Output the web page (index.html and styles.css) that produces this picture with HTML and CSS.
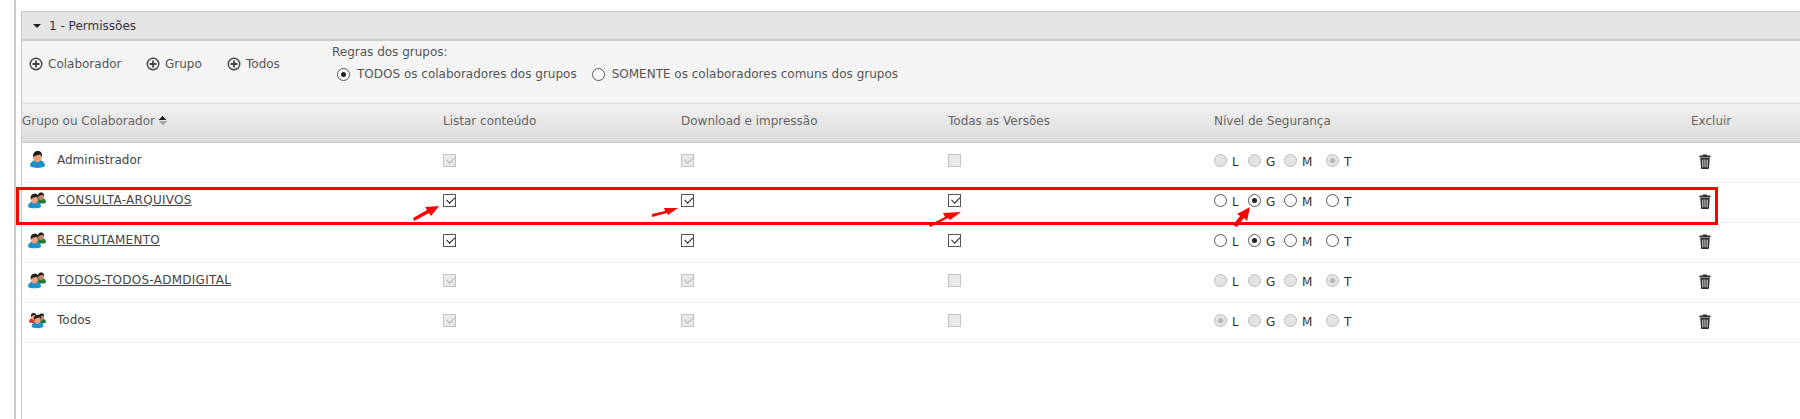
FILE: index.html
```html
<!DOCTYPE html>
<html lang="pt-BR">
<head>
    <meta charset="utf-8">
    <title>Permissões</title>
    <link rel="stylesheet" href="styles.css">
</head>
<body>

<svg class="defs" width="0" height="0">
    <symbol id="p-blue" viewBox="0 0 16 18">
        <path d="M0 16c0-3.500 2-5.500 5-6.500h6c3 1 5 3 5 6.500-2 2.600-14 2.600-16 0z" fill="#1e8fc9"/>
        <path d="M0 16c2 2.600 14 2.600 16 0-.2.800-1 2-8 2s-7.800-1.200-8-2z" fill="#b9dcee"/>
        <ellipse cx="8" cy="6.500" rx="4.400" ry="5.500" fill="#ee9f78"/>
        <path d="M3.500 7C2.500 2 5.500 0 8.500 0c3.500 0 5 2.500 3.900 7-.3-2-1-3-2-3.300C8 4.500 5 4.300 3.500 7z" fill="#1d1a1a"/>
    </symbol>
    <symbol id="p-green" viewBox="0 0 16 18">
        <path d="M0 16c0-3.500 2-5.500 5-6.500h6c3 1 5 3 5 6.500-2 2.600-14 2.600-16 0z" fill="#1f7a38"/>
        <ellipse cx="8" cy="6.500" rx="4.400" ry="5.500" fill="#c98663"/>
        <path d="M3.500 7C2.500 2 5.500 0 8.500 0c3.500 0 5 2.500 3.900 7-.3-2-1-3-2-3.300C8 4.500 5 4.300 3.500 7z" fill="#1d1a1a"/>
    </symbol>
    <symbol id="p-red" viewBox="0 0 16 18">
        <path d="M0 16c0-3.500 2-5.500 5-6.500h6c3 1 5 3 5 6.500-2 2.600-14 2.600-16 0z" fill="#e0352b"/>
        <ellipse cx="8" cy="6.500" rx="4.400" ry="5.500" fill="#ee9f78"/>
        <path d="M3.500 7C2.500 2 5.500 0 8.500 0c3.500 0 5 2.500 3.900 7-.3-2-1-3-2-3.300C8 4.500 5 4.300 3.500 7z" fill="#1d1a1a"/>
    </symbol>
    <symbol id="user" viewBox="0 0 18 18">
        <use href="#p-blue" x="2" y="0" width="15" height="17"/>
    </symbol>
    <symbol id="group" viewBox="0 0 18 18">
        <use href="#p-green" x="8" y="0" width="10" height="14"/>
        <use href="#p-blue" x="0" y="2" width="13" height="16"/>
    </symbol>
    <symbol id="all" viewBox="0 0 18 18">
        <use href="#p-red" x="1" y="1" width="9" height="12"/>
        <use href="#p-green" x="9" y="1" width="9" height="13"/>
        <use href="#p-blue" x="3.500" y="3" width="12" height="15"/>
    </symbol>
    <symbol id="plus" viewBox="0 0 14 14">
        <circle cx="7" cy="7" r="5.800" fill="none" stroke="#444" stroke-width="1.400"/>
        <path d="M7 3.500v7M3.500 7h7" stroke="#444" stroke-width="1.800"/>
    </symbol>
    <symbol id="trash" viewBox="0 0 12 15">
        <path d="M4 1.500V.5h4v1h3.500v2H.5v-2z" fill="#2b2b2b"/>
        <path d="M1.300 4h9.400l-.7 10a1 1 0 0 1-1 1H3a1 1 0 0 1-1-1z" fill="#2b2b2b"/>
        <path d="M3.800 5.500v7.800M6 5.500v7.800M8.200 5.500v7.800" stroke="#fff" stroke-width=".9"/>
    </symbol>
</svg>

<div class="page">
    <div class="panel">
        <div class="panel-title"><span class="caret"></span>1 - Permissões</div>

        <div class="toolbar">
            <a href="#" class="add add-first"><svg class="plus"><use href="#plus"/></svg>Colaborador</a>
            <a href="#" class="add add-group"><svg class="plus"><use href="#plus"/></svg>Grupo</a>
            <a href="#" class="add add-all"><svg class="plus"><use href="#plus"/></svg>Todos</a>
            <div class="rules">
                <div class="rules-label">Regras dos grupos:</div>
                <div class="rules-options">
                    <label class="rule"><input type="radio" class="radio" name="rule" checked>TODOS os colaboradores dos grupos</label>
                    <label class="rule"><input type="radio" class="radio" name="rule">SOMENTE os colaboradores comuns dos grupos</label>
                </div>
            </div>
        </div>

        <div class="row head">
            <div>Grupo ou Colaborador<span class="sort"></span></div>
            <div>Listar conteúdo</div>
            <div>Download e impressão</div>
            <div>Todas as Versões</div>
            <div>Nível de Segurança</div>
            <div>Excluir</div>
        </div>

        <div class="row">
            <div class="who"><svg class="avatar"><use href="#user"/></svg>Administrador</div>
            <div><input type="checkbox" class="check" checked disabled></div>
            <div><input type="checkbox" class="check" checked disabled></div>
            <div><input type="checkbox" class="check" disabled></div>
            <div class="levels">
                <label class="lvl lvl-l"><input type="radio" class="radio" name="a" disabled>L</label>
                <label class="lvl lvl-g"><input type="radio" class="radio" name="a" disabled>G</label>
                <label class="lvl lvl-m"><input type="radio" class="radio" name="a" disabled>M</label>
                <label class="lvl"><input type="radio" class="radio" name="a" checked disabled>T</label>
            </div>
            <div class="del"><svg class="trash"><use href="#trash"/></svg></div>
        </div>

        <div class="row">
            <div class="who"><svg class="avatar"><use href="#group"/></svg><a href="#" class="name">CONSULTA-ARQUIVOS</a></div>
            <div><input type="checkbox" class="check" checked></div>
            <div><input type="checkbox" class="check" checked></div>
            <div><input type="checkbox" class="check" checked></div>
            <div class="levels">
                <label class="lvl lvl-l"><input type="radio" class="radio" name="b">L</label>
                <label class="lvl lvl-g"><input type="radio" class="radio" name="b" checked>G</label>
                <label class="lvl lvl-m"><input type="radio" class="radio" name="b">M</label>
                <label class="lvl"><input type="radio" class="radio" name="b">T</label>
            </div>
            <div class="del"><svg class="trash"><use href="#trash"/></svg></div>
        </div>

        <div class="row">
            <div class="who"><svg class="avatar"><use href="#group"/></svg><a href="#" class="name">RECRUTAMENTO</a></div>
            <div><input type="checkbox" class="check" checked></div>
            <div><input type="checkbox" class="check" checked></div>
            <div><input type="checkbox" class="check" checked></div>
            <div class="levels">
                <label class="lvl lvl-l"><input type="radio" class="radio" name="c">L</label>
                <label class="lvl lvl-g"><input type="radio" class="radio" name="c" checked>G</label>
                <label class="lvl lvl-m"><input type="radio" class="radio" name="c">M</label>
                <label class="lvl"><input type="radio" class="radio" name="c">T</label>
            </div>
            <div class="del"><svg class="trash"><use href="#trash"/></svg></div>
        </div>

        <div class="row">
            <div class="who"><svg class="avatar"><use href="#group"/></svg><a href="#" class="name">TODOS-TODOS-ADMDIGITAL</a></div>
            <div><input type="checkbox" class="check" checked disabled></div>
            <div><input type="checkbox" class="check" checked disabled></div>
            <div><input type="checkbox" class="check" disabled></div>
            <div class="levels">
                <label class="lvl lvl-l"><input type="radio" class="radio" name="d" disabled>L</label>
                <label class="lvl lvl-g"><input type="radio" class="radio" name="d" disabled>G</label>
                <label class="lvl lvl-m"><input type="radio" class="radio" name="d" disabled>M</label>
                <label class="lvl"><input type="radio" class="radio" name="d" checked disabled>T</label>
            </div>
            <div class="del"><svg class="trash"><use href="#trash"/></svg></div>
        </div>

        <div class="row">
            <div class="who"><svg class="avatar"><use href="#all"/></svg>Todos</div>
            <div><input type="checkbox" class="check" checked disabled></div>
            <div><input type="checkbox" class="check" checked disabled></div>
            <div><input type="checkbox" class="check" disabled></div>
            <div class="levels">
                <label class="lvl lvl-l"><input type="radio" class="radio" name="e" checked disabled>L</label>
                <label class="lvl lvl-g"><input type="radio" class="radio" name="e" disabled>G</label>
                <label class="lvl lvl-m"><input type="radio" class="radio" name="e" disabled>M</label>
                <label class="lvl"><input type="radio" class="radio" name="e" disabled>T</label>
            </div>
            <div class="del"><svg class="trash"><use href="#trash"/></svg></div>
        </div>
    </div>
</div>

<!-- marcacoes em vermelho por cima da tabela -->
<div class="mark-box"></div>
<svg class="mark-arrows" width="1800" height="419">
    <polygon points="413,218 427,210 425,207 439,206 431,216 429,213 414,221" fill="#f00"/>
    <polygon points="652,214 665,211 664,208 678,208 668,215 667,213 652,217" fill="#f00"/>
    <polygon points="929,225 945,217 943,213 961,212 950,220 948,218 930,227" fill="#f00"/>
    <polygon points="1233,225 1240,216 1237,214 1250,207 1247,221 1244,218 1237,227" fill="#f00"/>
</svg>

</body>
</html>
```

FILE: styles.css
```css
* {
    box-sizing: border-box;
}
html, body {
    height: 100%;
}
body {
    margin: 0;
    background: #fff;
    font: 12px "DejaVu Sans", Verdana, sans-serif;
    color: #555;
    overflow: hidden;
}
a {
    color: inherit;
}
.defs {
    position: absolute;
}
.page {
    height: 100%;
    margin-left: 14px;
    padding: 11px 0 0 5px;
    border-left: 2px solid #ccc;
}
.panel {
    height: 100%;
    border-left: 1px solid #ccc;
}
.panel-title {
    display: flex;
    align-items: center;
    height: 30px;
    padding-left: 11px;
    background: #e4e4e4;
    border-top: 1px solid #ccc;
    border-bottom: 2px solid #ccc;
    color: #334;
}
.caret {
    width: 0;
    height: 0;
    margin-right: 8px;
    border: 4px solid transparent;
    border-top: 4px solid #222;
    border-bottom: 0;
}

/* barra de adicionar */
.toolbar {
    display: flex;
    height: 63px;
    background: #f4f4f4;
    border-bottom: 1px solid #ddd;
}
.add {
    display: flex;
    align-items: center;
    gap: 5px;
    height: 14px;
    margin-top: 16px;
    text-decoration: none;
}
.add-first {
    width: 117px;
    margin-left: 7px;
}
.add-group {
    width: 81px;
}
.add-all {
    width: 105px;
}
.plus {
    width: 14px;
    height: 14px;
}
.rules-label {
    margin-top: 4px;
    line-height: 14px;
}
.rules-options {
    display: flex;
    gap: 15px;
    margin-top: 8px;
    padding-left: 5px;
}
.rule {
    display: flex;
    align-items: center;
    gap: 7px;
    line-height: 14px;
}

/* tabela */
.row {
    display: grid;
    grid-template-columns: 421px 238px 267px 266px 477px 1fr;
    height: 40px;
    border-bottom: 1px solid #eee;
    padding-top: 11px;
}
.head {
    height: 39px;
    padding-top: 10px;
    background: linear-gradient(#f1f1f1, #dcdcdc);
    border-bottom: 1px solid #ccc;
    color: #666;
    line-height: 15px;
}
.who {
    display: flex;
    align-items: flex-start;
    color: #444;
    line-height: 12px;
}
.name {
    letter-spacing: .27px;
}
.avatar {
    width: 18px;
    height: 18px;
    margin: -3px 11px 0 6px;
    flex: none;
}
.sort {
    display: inline-block;
    width: 8px;
    height: 9px;
    margin-left: 4px;
    background: linear-gradient(135deg, transparent 50%, #222 50%) 0 0 / 4px 4px no-repeat,
        linear-gradient(225deg, transparent 50%, #222 50%) 4px 0 / 4px 4px no-repeat,
        linear-gradient(45deg, transparent 50%, #aaa 50%) 0 5px / 4px 4px no-repeat,
        linear-gradient(315deg, transparent 50%, #aaa 50%) 4px 5px / 4px 4px no-repeat;
}

/* campos */
.check, .radio {
    appearance: none;
    display: block;
    position: relative;
    flex: none;
    margin: 0;
    border: 1px solid #555;
    background: #fff;
}
.check {
    width: 13px;
    height: 13px;
}
.check:checked::after {
    content: "";
    position: absolute;
    left: 2px;
    top: 1px;
    width: 7px;
    height: 4px;
    border-left: 1.500px solid #222;
    border-bottom: 1.500px solid #222;
    transform: rotate(-45deg) translate(0, 1px);
}
.check:disabled {
    background: #e9e9e9;
    border-color: #c4c4c4;
}
.check:disabled:checked::after {
    border-color: #b8b8b8;
}
.radio {
    width: 13px;
    height: 13px;
    border-radius: 50%;
}
.radio:checked::after {
    content: "";
    position: absolute;
    left: 3px;
    top: 3px;
    width: 5px;
    height: 5px;
    border-radius: 50%;
    background: #222;
}
.radio:disabled {
    background: #e3e3e3;
    border-color: #bdbdbd;
}
.radio:disabled:checked::after {
    background: #b4b4b4;
}
.levels {
    display: flex;
}
.lvl {
    display: flex;
    gap: 4px;
    color: #333;
    line-height: 17px;
}
.lvl .radio {
    margin-right: 1px;
}
.lvl-l {
    width: 34px;
}
.lvl-g {
    width: 36px;
}
.lvl-m {
    width: 42px;
}
.del {
    padding-left: 8px;
}
.trash {
    display: block;
    width: 12px;
    height: 15px;
}

/* marcacoes */
.mark-box {
    position: absolute;
    left: 16px;
    top: 187px;
    width: 1702px;
    height: 38px;
    border: 3px solid #f00;
}
.mark-arrows {
    position: absolute;
    left: 0;
    top: 0;
    pointer-events: none;
}
```
